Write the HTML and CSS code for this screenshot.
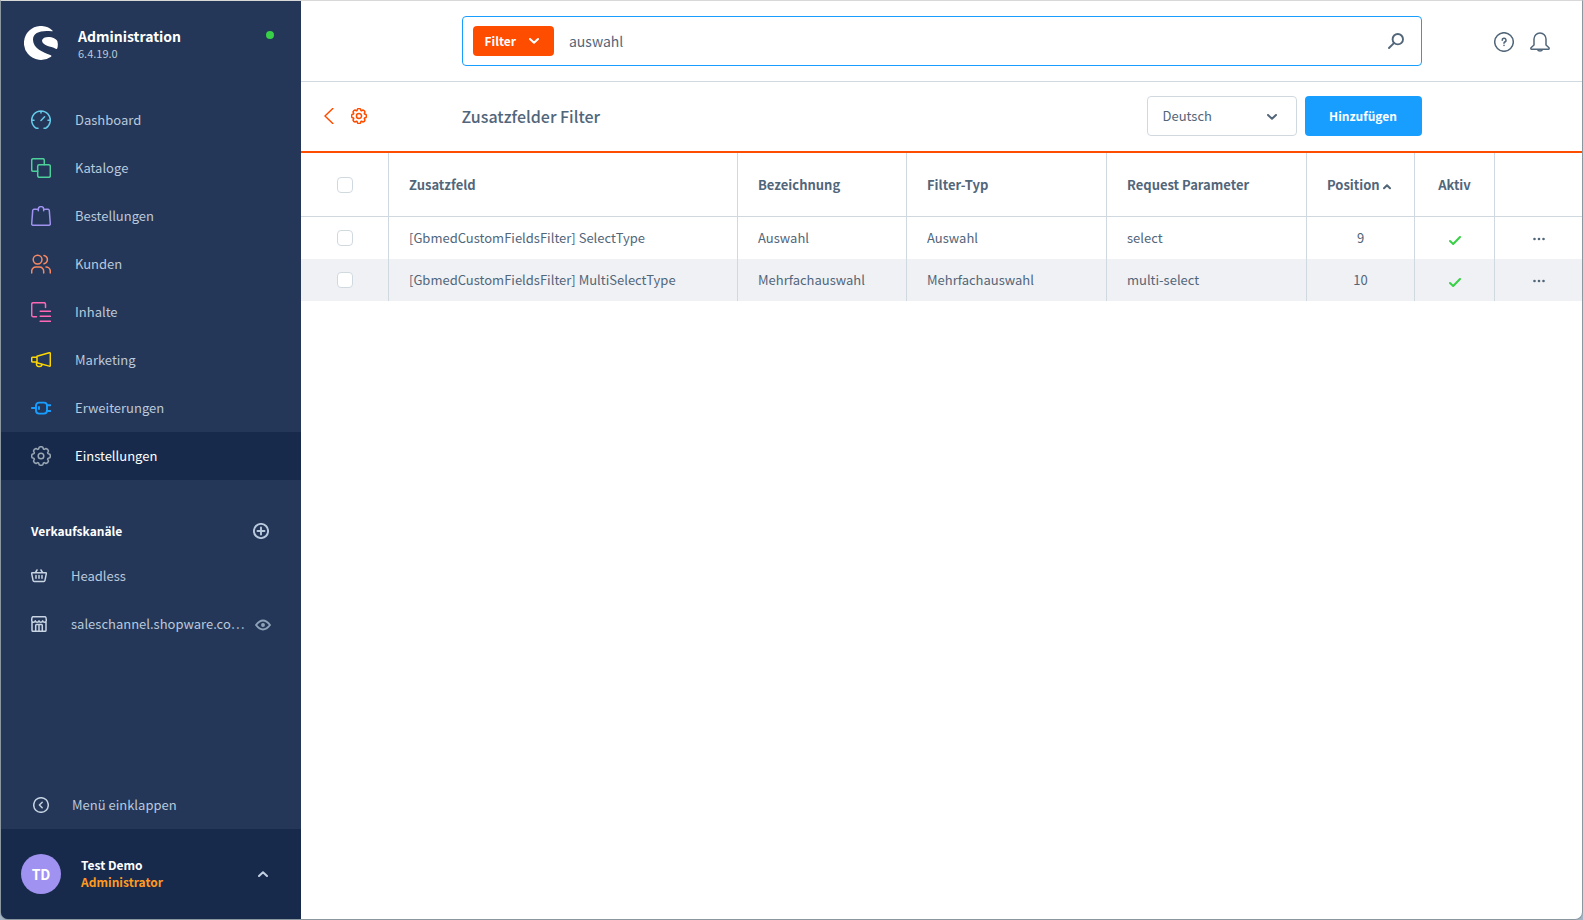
FILE: index.html
```html
<!DOCTYPE html>
<html lang="de">
<head>
<meta charset="utf-8">
<title>Zusatzfelder Filter | Administration</title>
<link rel="stylesheet" href="styles.css">
</head>
<body>
<div class="window">
  <aside class="sidebar">
    <div class="brand">
      <svg class="brand-logo" viewBox="0 0 102 102" aria-hidden="true">
        <path d="M86 14A51 51 0 1 0 81 92C84 90 82 89 79 87C58 78 27 68 27 41C27 19 52 12 83 16C86 16 87 15 86 14Z"/>
        <path d="M54 43C56 34 70 31 82 34C92 37 98 41 100 45C102 53 102 60 100 67C99 69 97 69 95 68C81 61 54 60 54 43Z"/>
      </svg>
      <div class="brand-text">
        <strong class="brand-name">Administration</strong>
        <span class="brand-version">6.4.19.0</span>
      </div>
      <span class="status-dot"></span>
    </div>
    <nav class="menu">
      <a class="menu-item" href="#"><svg class="icon-20" viewBox="0 0 20 20" stroke="#65c9e8"><path d="M7 18.3H5.4A9.3 9.3 0 1 1 14.6 18.3H13M10 1V3M.8 10.300H3M19.200 10.300H17M10 10.500L13.600 6.700"/></svg>Dashboard</a>
      <a class="menu-item" href="#"><svg class="icon-20" viewBox="0 0 20 20" stroke="#4dd09a"><path d="M6.7 13.3H2.2A1.5 1.5 0 0 1 .7 11.8V2.2A1.5 1.5 0 0 1 2.2 .7H11.8A1.5 1.5 0 0 1 13.3 2.2V6.7"/><rect x="6.7" y="6.7" width="12.6" height="12.6" rx="1.5"/></svg>Kataloge</a>
      <a class="menu-item" href="#"><svg class="icon-20" viewBox="0 0 20 20" stroke="#a092f0"><path d="M5 3.3H3A1.3 1.3 0 0 0 1.7 4.6L.7 17.8A1.4 1.4 0 0 0 2.1 19.3H17.9A1.4 1.4 0 0 0 19.3 17.8L18.3 4.6A1.3 1.3 0 0 0 17 3.3H15M7.3 4.8V3.3A2.7 2.7 0 0 1 12.7 3.3V4.8M7.3 3.3H5.8M12.7 3.3H14.2"/></svg>Bestellungen</a>
      <a class="menu-item" href="#"><svg class="icon-20" viewBox="0 0 20 20" stroke="#f88962"><circle cx="6.6" cy="5.6" r="4.4"/><path d="M13 1.4A4.3 4.3 0 0 1 13 9.8M.7 19V17.2A4.2 4.2 0 0 1 4.9 13H8.5A4.2 4.2 0 0 1 12.7 17.2V19M15 13A4.3 4.3 0 0 1 19.3 17.2V19"/></svg>Kunden</a>
      <a class="menu-item" href="#"><svg class="icon-20" viewBox="0 0 20 20" stroke="#ff68b4"><path d="M5.5 14.7H2.2A1.5 1.5 0 0 1 .7 13.2V2.2A1.5 1.5 0 0 1 2.2 .7H13A1.5 1.5 0 0 1 14.5 2.2V5.5M9.2 9.3H19.5M9.2 14.3H19.5M9.2 19.3H19.5"/></svg>Inhalte</a>
      <a class="menu-item" href="#"><svg class="icon-20" viewBox="0 0 20 20" stroke="#ffd700"><path d="M6 6.3L18.2 2.7Q19.3 2.4 19.3 3.5V15.3Q19.3 16.4 18.2 16.1L6 12.8ZM6 7.3H1.7Q.7 7.3 .7 8.3V11Q.7 12 1.7 12H6M5.5 13V14.3A2 2 0 0 0 7.5 16.4H8.8A2 2 0 0 0 10.8 14.4"/></svg>Marketing</a>
      <a class="menu-item" href="#"><svg class="icon-20 icon-bold" viewBox="0 0 20 20" stroke="#189eff"><rect x="5" y="4.6" width="11" height="11" rx="3"/><path d="M.8 10H5M8 9V11M16 7.2H19.4M16 13H19.4"/></svg>Erweiterungen</a>
      <a class="menu-item is-active" href="#"><svg class="icon-20" viewBox="0 0 20 20" stroke="#9aa8b5"><path d="M8.2 1.2Q10 .2 11.8 1.2L12.4 3.1L13.2 3.4L15 2.5Q17 3 17.5 5L16.6 6.8L16.9 7.6L18.8 8.2Q19.8 10 18.8 11.8L16.9 12.4L16.6 13.2L17.5 15Q17 17 15 17.5L13.2 16.6L12.4 16.9L11.8 18.8Q10 19.8 8.2 18.8L7.6 16.9L6.8 16.6L5 17.5Q3 17 2.5 15L3.4 13.2L3.1 12.4L1.2 11.8Q.2 10 1.2 8.2L3.1 7.6L3.4 6.8L2.5 5Q3 3 5 2.5L6.8 3.4L7.6 3.1Z"/><circle cx="10" cy="10" r="2.8"/></svg>Einstellungen</a>
    </nav>
    <section class="channels">
      <div class="channels-head">
        <h2 class="channels-title">Verkaufskanäle</h2>
        <button class="icon-button" type="button" aria-label="Verkaufskanal hinzufügen"><svg class="icon-16 icon-bold" viewBox="0 0 16 16" stroke="#b9c9dd"><circle cx="8" cy="8" r="7.1"/><path d="M8 4.5V11.5M4.5 8H11.5"/></svg></button>
      </div>
      <div class="channel">
        <a class="channel-link" href="#"><svg class="icon-16" viewBox="0 0 16 16" stroke="#c9d5e3"><path d="M1.2 4.7H14.8Q15.6 5 15.3 5.8L13.9 12.6Q13.7 13.4 12.8 13.4H3.2Q2.3 13.4 2.1 12.6L.7 5.8Q.4 5 1.2 4.7M4.5 4.5L6 2M11.5 4.5L10 2M5 7.6V10.3M8 7.6V10.3M11 7.6V10.3"/></svg>Headless</a>
      </div>
      <div class="channel">
        <a class="channel-link" href="#"><svg class="icon-16" viewBox="0 0 16 16" stroke="#c9d5e3"><path d="M2 .7H14Q15.3 .7 15.3 4.5Q15.2 6.2 13.6 6.2T11.7 4.8Q11.4 6.2 9.8 6.2T8 4.8Q7.7 6.2 6.1 6.2T4.3 4.8Q4 6.2 2.4 6.2T.7 4.5Q.7 .7 2 .7M1 6V14.3Q1 15.3 2 15.3H14Q15 15.3 15 14.3V6M4.7 15V9.5Q4.7 8.6 5.6 8.6H10.4Q11.3 8.6 11.3 9.5V15M8 8.6V15"/></svg>saleschannel.shopware.co…</a>
        <button class="icon-button" type="button" aria-label="Verkaufskanal ansehen"><svg class="icon-16 icon-bold" viewBox="0 0 16 16" stroke="#8fa3b8"><path d="M1 9Q8 0 15 9Q8 18 1 9Z"/><circle cx="8" cy="9" r="1"/></svg></button>
      </div>
    </section>
    <button class="collapse" type="button"><svg class="icon-16" viewBox="0 0 16 16" stroke="#c3d0e0"><circle cx="8" cy="8" r="7.3"/><path d="M9.2 5.2L6.4 8L9.2 10.8"/></svg>Menü einklappen</button>
    <button class="user" type="button">
      <span class="avatar">TD</span>
      <span class="user-text">
        <span class="user-name">Test Demo</span>
        <span class="user-role">Administrator</span>
      </span>
      <svg class="chevron" viewBox="0 0 10 6" stroke="#c3d0e0"><path d="M1 5L5 1.2L9 5"/></svg>
    </button>
  </aside>

  <div class="page">
    <header class="topbar">
      <div class="search">
        <button class="filter" type="button">Filter<svg class="chevron" viewBox="0 0 10 6" stroke="#fff"><path d="M1 1L5 4.8L9 1"/></svg></button>
        <input class="search-input" type="text" value="auswahl" aria-label="Suche">
        <button class="icon-button" type="button" aria-label="Suchen"><svg class="icon-16 icon-bold" viewBox="0 0 16 16" stroke="#52667a"><circle cx="9.8" cy="6.2" r="5.2"/><path d="M5.9 10.1L1 15"/></svg></button>
      </div>
      <div class="topbar-actions">
        <button class="icon-button" type="button" aria-label="Hilfe"><svg class="icon-20" viewBox="0 0 20 20" stroke="#52667a"><circle cx="10" cy="10" r="9.3"/><path d="M8.2 8.3A1.9 1.9 0 1 1 10.6 10Q10 10.3 10 11.3M10 13.3V13.5"/></svg></button>
        <button class="icon-button" type="button" aria-label="Benachrichtigungen"><svg class="icon-20" viewBox="0 0 20 20" stroke="#52667a"><path d="M4 13V7A6 6 0 0 1 16 7V13L19 15.8Q19.5 17.2 18.3 17.3H1.7Q.5 17.2 1 15.8ZM7.5 17.5A2.6 2.2 0 0 0 12.5 17.5"/></svg></button>
      </div>
    </header>

    <div class="smartbar">
      <div class="smartbar-back">
        <a class="back-link" href="#" aria-label="Zurück"><svg class="back-icon" viewBox="0 0 10 16" stroke="#ff4d00"><path d="M8.8 .5L1 8L8.8 15.5"/></svg></a>
        <a class="back-link" href="#" aria-label="Einstellungen"><svg class="icon-16 icon-bold" viewBox="0 0 20 20" stroke="#ff4d00"><path d="M8.2 1.2Q10 .2 11.8 1.2L12.4 3.1L13.2 3.4L15 2.5Q17 3 17.5 5L16.6 6.8L16.9 7.6L18.8 8.2Q19.8 10 18.8 11.8L16.9 12.4L16.6 13.2L17.5 15Q17 17 15 17.5L13.2 16.6L12.4 16.9L11.8 18.8Q10 19.8 8.2 18.8L7.6 16.9L6.8 16.6L5 17.5Q3 17 2.5 15L3.4 13.2L3.1 12.4L1.2 11.8Q.2 10 1.2 8.2L3.1 7.6L3.4 6.8L2.5 5Q3 3 5 2.5L6.8 3.4L7.6 3.1Z"/><circle cx="10" cy="10" r="3.2"/></svg></a>
      </div>
      <div class="smartbar-main">
        <h1 class="smartbar-title">Zusatzfelder Filter</h1>
        <div class="language">
          <select class="language-select" aria-label="Sprache"><option>Deutsch</option><option>English</option></select>
          <svg class="chevron language-chevron" viewBox="0 0 10 6" stroke="#52667a"><path d="M1 1L5 4.8L9 1"/></svg>
        </div>
        <button class="primary" type="button">Hinzufügen</button>
      </div>
    </div>

    <table class="grid">
      <colgroup>
        <col class="col-check"><col><col class="col-label"><col class="col-type"><col class="col-param"><col class="col-position"><col class="col-active"><col class="col-actions">
      </colgroup>
      <thead>
        <tr>
          <th class="center"><input class="checkbox" type="checkbox" aria-label="Alle auswählen"></th>
          <th>Zusatzfeld</th>
          <th>Bezeichnung</th>
          <th>Filter-Typ</th>
          <th>Request Parameter</th>
          <th>Position <svg class="sort-icon" viewBox="0 0 8 6" stroke="#52667a"><path d="M1 4.2L4 1.2L7 4.2"/></svg></th>
          <th class="center">Aktiv</th>
          <th></th>
        </tr>
      </thead>
      <tbody>
        <tr>
          <td class="center"><input class="checkbox" type="checkbox" aria-label="SelectType auswählen"></td>
          <td>[GbmedCustomFieldsFilter] SelectType</td>
          <td>Auswahl</td>
          <td>Auswahl</td>
          <td>select</td>
          <td class="center">9</td>
          <td class="center"><svg class="check-icon" viewBox="0 0 12 9" stroke="#37d046"><path d="M1 5L4.2 8L11 1"/></svg></td>
          <td class="center"><button class="icon-button" type="button" aria-label="Aktionen"><svg class="dots" viewBox="0 0 12 4"><circle cx="1.5" cy="2" r="1.3"/><circle cx="6" cy="2" r="1.3"/><circle cx="10.5" cy="2" r="1.3"/></svg></button></td>
        </tr>
        <tr>
          <td class="center"><input class="checkbox" type="checkbox" aria-label="MultiSelectType auswählen"></td>
          <td>[GbmedCustomFieldsFilter] MultiSelectType</td>
          <td>Mehrfachauswahl</td>
          <td>Mehrfachauswahl</td>
          <td>multi-select</td>
          <td class="center">10</td>
          <td class="center"><svg class="check-icon" viewBox="0 0 12 9" stroke="#37d046"><path d="M1 5L4.2 8L11 1"/></svg></td>
          <td class="center"><button class="icon-button" type="button" aria-label="Aktionen"><svg class="dots" viewBox="0 0 12 4"><circle cx="1.5" cy="2" r="1.3"/><circle cx="6" cy="2" r="1.3"/><circle cx="10.5" cy="2" r="1.3"/></svg></button></td>
        </tr>
      </tbody>
    </table>
  </div>
</div>
</body>
</html>
```
FILE: styles.css
```css
* { box-sizing: border-box; }

body {
  margin: 0;
  background: #a3b4c4;
  color: #52667a;
  font-family: "Noto Sans CJK SC", "Noto Sans", sans-serif;
  font-size: 13px;
  line-height: 16px;
}

a { color: inherit; text-decoration: none; }

button, input, select { font: inherit; color: inherit; }

button { padding: 0; border: 0; background: none; cursor: pointer; }

svg {
  display: block;
  flex: none;
  fill: none;
  stroke-width: 1.5;
  stroke-linecap: round;
  stroke-linejoin: round;
}

.window {
  display: flex;
  min-height: 100vh;
  overflow: hidden;
  border: 1px solid #8b979f;
  border-top-color: #d8d8d8;
  border-radius: 0 0 8px 8px;
  background: #fff;
}

.icon-20 { width: 20px; height: 20px; }
.icon-16 { width: 16px; height: 16px; }
.icon-bold { stroke-width: 1.9; }
.icon-button { display: inline-flex; vertical-align: middle; }
.chevron { width: 10px; height: 6px; stroke-width: 2; }

/* Sidebar */
.sidebar {
  display: flex;
  flex: none;
  flex-direction: column;
  width: 300px;
  background: #243758;
  color: #b9c9dd;
}

.brand {
  display: flex;
  gap: 20px;
  height: 95px;
  padding: 25px 27px 0 23px;
}
.brand-logo { width: 34px; height: 34px; fill: #fff; }
.brand-text { flex: 1; padding-top: 1px; }
.brand-name { display: block; color: #fff; font-size: 14px; line-height: 18px; }
.brand-version { display: block; font-size: 11px; line-height: 16px; }
.status-dot { width: 8px; height: 8px; margin-top: 5px; border-radius: 50%; background: #37d046; }

.menu-item {
  display: flex;
  align-items: center;
  gap: 24px;
  height: 48px;
  padding: 0 30px;
}
.menu-item.is-active { background: #172a4c; color: #fff; }

.channels { padding: 30px 30px 0 30px; }
.channels-head {
  display: flex;
  align-items: center;
  justify-content: space-between;
  height: 42px;
  padding-right: 2px;
}
.channels-title { margin: 0; color: #fff; font-size: 12px; line-height: 16px; }
.channel { display: flex; align-items: center; height: 48px; }
.channel-link { display: flex; flex: 1; align-items: center; gap: 24px; white-space: nowrap; }

.collapse {
  display: flex;
  align-items: center;
  gap: 23px;
  height: 48px;
  margin-top: auto;
  padding: 0 32px;
}

.user {
  display: flex;
  align-items: center;
  gap: 20px;
  height: 90px;
  padding: 0 33px 0 20px;
  background: #172a4c;
  text-align: left;
}
.avatar {
  width: 40px;
  border-radius: 50%;
  background: #a092f0;
  color: #fff;
  font-size: 14px;
  font-weight: 700;
  line-height: 40px;
  text-align: center;
}
.user-text { flex: 1; padding-bottom: 2px; font-size: 12px; font-weight: 700; line-height: 17px; }
.user-name { display: block; color: #fff; }
.user-role { display: block; color: #ff9a1f; }

/* Content */
.page { flex: 1; min-width: 0; }

.topbar, .smartbar {
  display: grid;
  grid-template-columns: 1fr minmax(0, 960px) 1fr;
  align-items: center;
}
.topbar { height: 81px; border-bottom: 1px solid #d1d9e0; }

.search {
  display: flex;
  grid-column: 2;
  align-items: center;
  height: 50px;
  padding: 0 17px 0 10px;
  border: 1px solid #189eff;
  border-radius: 4px;
}
.filter {
  display: flex;
  align-items: center;
  gap: 13px;
  height: 30px;
  padding: 0 15px 0 12px;
  border-radius: 4px;
  background: #ff4d00;
  color: #fff;
  font-size: 12px;
  font-weight: 700;
}
.search-input {
  flex: 1;
  min-width: 0;
  padding: 0 15px;
  border: 0;
  outline: 0;
  background: none;
  font-size: 14px;
}
.topbar-actions {
  display: flex;
  justify-content: flex-end;
  gap: 16px;
  padding: 2px 32px 0 0;
}

.smartbar { height: 71px; padding-bottom: 2px; border-bottom: 2px solid #ff4d00; }
.smartbar-back { display: flex; align-items: center; gap: 17px; padding-left: 23px; }
.back-icon { width: 10px; height: 16px; }
.smartbar-main { display: flex; align-items: center; gap: 8px; }
.smartbar-title { flex: 1; margin: 0; font-size: 16px; font-weight: 500; line-height: 24px; }
.language { position: relative; width: 150px; }
.language-select {
  display: block;
  width: 100%;
  height: 40px;
  padding: 0 40px 0 15px;
  border: 1px solid #d1d9e0;
  border-radius: 4px;
  background: #fff;
  appearance: none;
}
.language-chevron { position: absolute; top: 18px; right: 20px; pointer-events: none; }
.primary {
  min-width: 117px;
  height: 40px;
  padding: 0 24px;
  border-radius: 4px;
  background: #189eff;
  color: #fff;
  font-size: 12px;
  font-weight: 700;
}

/* Data grid */
.grid { width: 100%; border-spacing: 0; table-layout: fixed; }
.grid th, .grid td {
  height: 42px;
  padding: 0 20px;
  border-right: 1px solid #d1d9e0;
  text-align: left;
  white-space: nowrap;
}
.grid th { height: 64px; border-bottom: 1px solid #d1d9e0; }
.grid th:last-child, .grid td:last-child { border-right: 0; }
.grid .center { text-align: center; }
.grid tbody tr:nth-child(even) { background: #f0f1f4; }
.col-check { width: 88px; }
.col-label { width: 169px; }
.col-type, .col-param { width: 200px; }
.col-position { width: 108px; }
.col-active { width: 80px; }
.col-actions { width: 87px; }

.checkbox {
  display: block;
  width: 16px;
  height: 16px;
  margin: 0 auto;
  border: 1px solid #d1d9e0;
  border-radius: 4px;
  background: #fff;
  appearance: none;
}
.sort-icon { display: inline-block; width: 8px; height: 6px; stroke-width: 2; }
.check-icon { width: 12px; height: 9px; margin: 4px auto 0; stroke-width: 2; }
.dots { width: 12px; height: 4px; fill: #52667a; }
```
